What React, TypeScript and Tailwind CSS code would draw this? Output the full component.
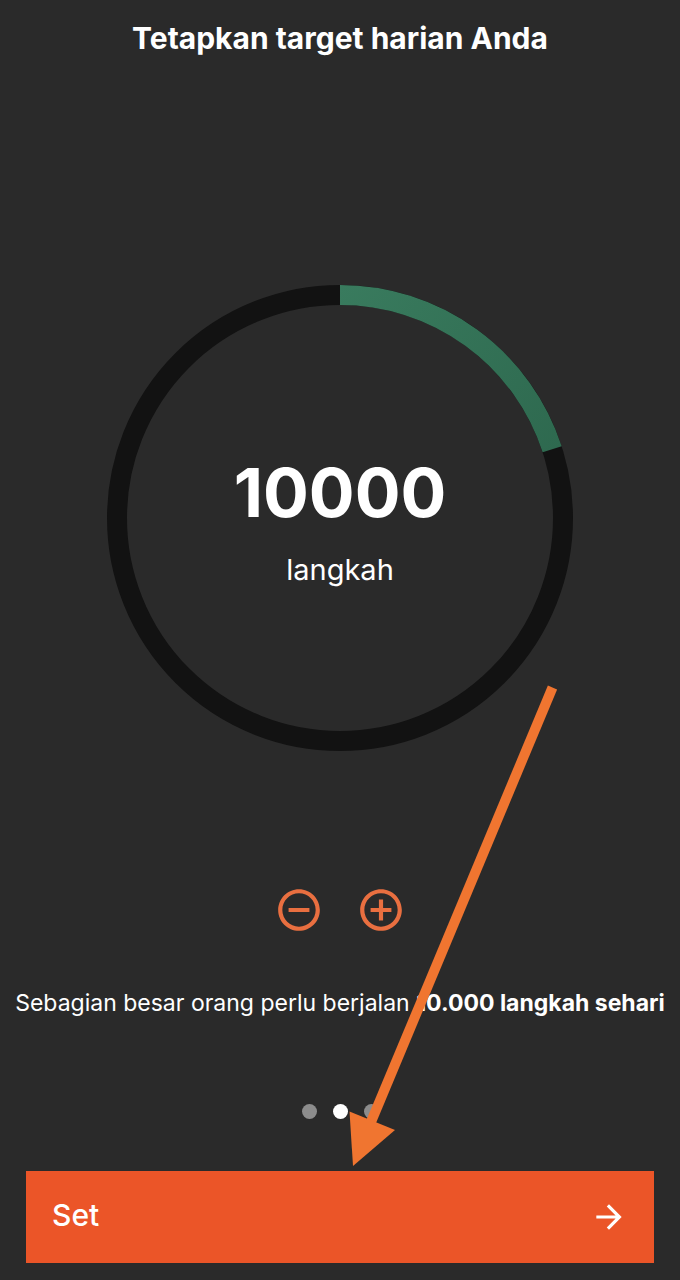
import { useState } from 'react';
import { MdAddCircleOutline, MdArrowForward, MdRemoveCircleOutline } from 'react-icons/md';

const STEP = 500;
const MAX_STEPS = 50000;

const pages = ['bg-[#8c8c8c]', 'bg-white', 'bg-[#8c8c8c]'];

function GoalRing({ steps }: { steps: number }) {
  const radius = 223;
  const length = 2 * Math.PI * radius;
  const filled = length * (steps / MAX_STEPS);

  return (
    <div className="grid w-full max-w-[466px] place-items-center">
      <svg viewBox="0 0 466 466" className="col-start-1 row-start-1 w-full" fill="none" strokeWidth="20">
        <defs>
          <linearGradient id="progress" gradientUnits="userSpaceOnUse" x1="466" y1="233" x2="296" y2="450">
            <stop offset="0" stopColor="#397b5e" />
            <stop offset="1" stopColor="#2e694f" />
          </linearGradient>
        </defs>
        <circle cx="233" cy="233" r={radius} stroke="#121212" />
        <circle
          cx="233"
          cy="233"
          r={radius}
          stroke="url(#progress)"
          strokeDasharray={`${filled} ${length}`}
          transform="rotate(-90 233 233)"
        />
      </svg>
      <div className="col-start-1 row-start-1 pt-1 text-center">
        <p className="text-[68px] leading-[80px] font-bold">{steps}</p>
        <p className="mt-5 text-[29px] leading-[36px]">langkah</p>
      </div>
    </div>
  );
}

export default function App() {
  const [steps, setSteps] = useState(10000);

  return (
    <div className="relative flex min-h-screen flex-col items-center bg-[#2a2a2a] pt-5 pb-[17px] font-['Inter',sans-serif] text-white">
      <h1 className="text-[30px] leading-[36px] font-bold">Tetapkan target harian Anda</h1>

      <div className="mt-[229px] flex w-full justify-center">
        <GoalRing steps={steps} />
      </div>

      <div className="mt-[134px] flex gap-8 text-[#e96f40]">
        <button type="button" aria-label="Kurangi" onClick={() => setSteps(Math.max(STEP, steps - STEP))}>
          <MdRemoveCircleOutline size={50} />
        </button>
        <button type="button" aria-label="Tambah" onClick={() => setSteps(Math.min(MAX_STEPS, steps + STEP))}>
          <MdAddCircleOutline size={50} />
        </button>
      </div>

      <p className="mt-[52px] text-center text-[23px] leading-[32px]">
        Sebagian besar orang perlu berjalan <strong className="font-bold">10.000 langkah sehari</strong>
      </p>

      <div className="mt-[85px] flex gap-4">
        {pages.map((color, i) => (
          <span key={i} className={`size-[15px] rounded-full ${color}`} />
        ))}
      </div>

      <div className="mt-[52px] w-full px-[26px]">
        <button
          type="button"
          className="flex h-[92px] w-full items-center justify-between bg-[#eb5528] px-[26px] text-[30px] leading-[36px] font-medium"
        >
          <span className="pb-1">Set</span>
          <MdArrowForward size={38} />
        </button>
      </div>

      {/* Pointer to the confirm button */}
      <svg viewBox="0 0 680 1280" className="pointer-events-none absolute inset-0 size-full" aria-hidden="true">
        <path d="M552.5 687.5 371 1122" stroke="#f07530" strokeWidth="10" fill="none" />
        <path d="M349.5 1111.5 395 1130 353 1166Z" fill="#f07530" />
      </svg>
    </div>
  );
}
